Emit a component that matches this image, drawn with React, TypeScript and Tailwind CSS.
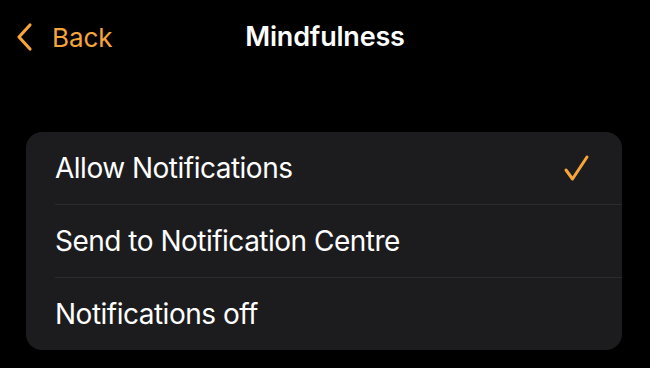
const options = [
  { label: "Allow Notifications", selected: true },
  { label: "Send to Notification Centre", selected: false },
  { label: "Notifications off", selected: false },
];

function Chevron() {
  return (
    <svg width="18" height="30" viewBox="0 0 18 30" fill="none">
      <path
        d="M15 3 L4 15 L15 27"
        stroke="#f7a43b"
        strokeWidth="3.2"
        strokeLinecap="round"
        strokeLinejoin="round"
      />
    </svg>
  );
}

function Check() {
  return (
    <svg width="28" height="30" viewBox="0 0 28 30" fill="none">
      <path
        d="M4 17 L10.5 26 L25 4"
        stroke="#f7a43b"
        strokeWidth="3"
        strokeLinecap="round"
        strokeLinejoin="round"
      />
    </svg>
  );
}

export default function App() {
  return (
    <div
      className="w-[650px] h-[368px] bg-black text-white overflow-hidden"
      style={{ fontFamily: "Inter, Roboto, 'Liberation Sans', sans-serif" }}
    >
      {/* Header */}
      <div className="relative flex items-center h-[74px] px-[15px]">
        <div className="flex items-center gap-[19px] text-[#f7a43b]">
          <Chevron />
          <span className="text-[26px] tracking-[-0.1px]">Back</span>
        </div>
        <div className="absolute inset-x-0 top-0 h-[74px] flex items-center justify-center pointer-events-none">
          <span className="text-[27px] font-semibold tracking-[-0.2px]">Mindfulness</span>
        </div>
      </div>

      {/* List */}
      <div className="px-[26px] pt-[58px]">
        <div className="w-[596px] rounded-[16px] bg-[#1c1c1e] overflow-hidden">
          {options.map((opt, i) => (
            <div key={opt.label} className="pl-[29px]">
              {i > 0 && <div className="h-px bg-[#2c2c2e]" />}
              <div className="flex items-center justify-between h-[72px] pr-[32px]">
                <span className="text-[28px] tracking-[-0.5px]">{opt.label}</span>
                {opt.selected && <Check />}
              </div>
            </div>
          ))}
        </div>
      </div>
    </div>
  );
}
